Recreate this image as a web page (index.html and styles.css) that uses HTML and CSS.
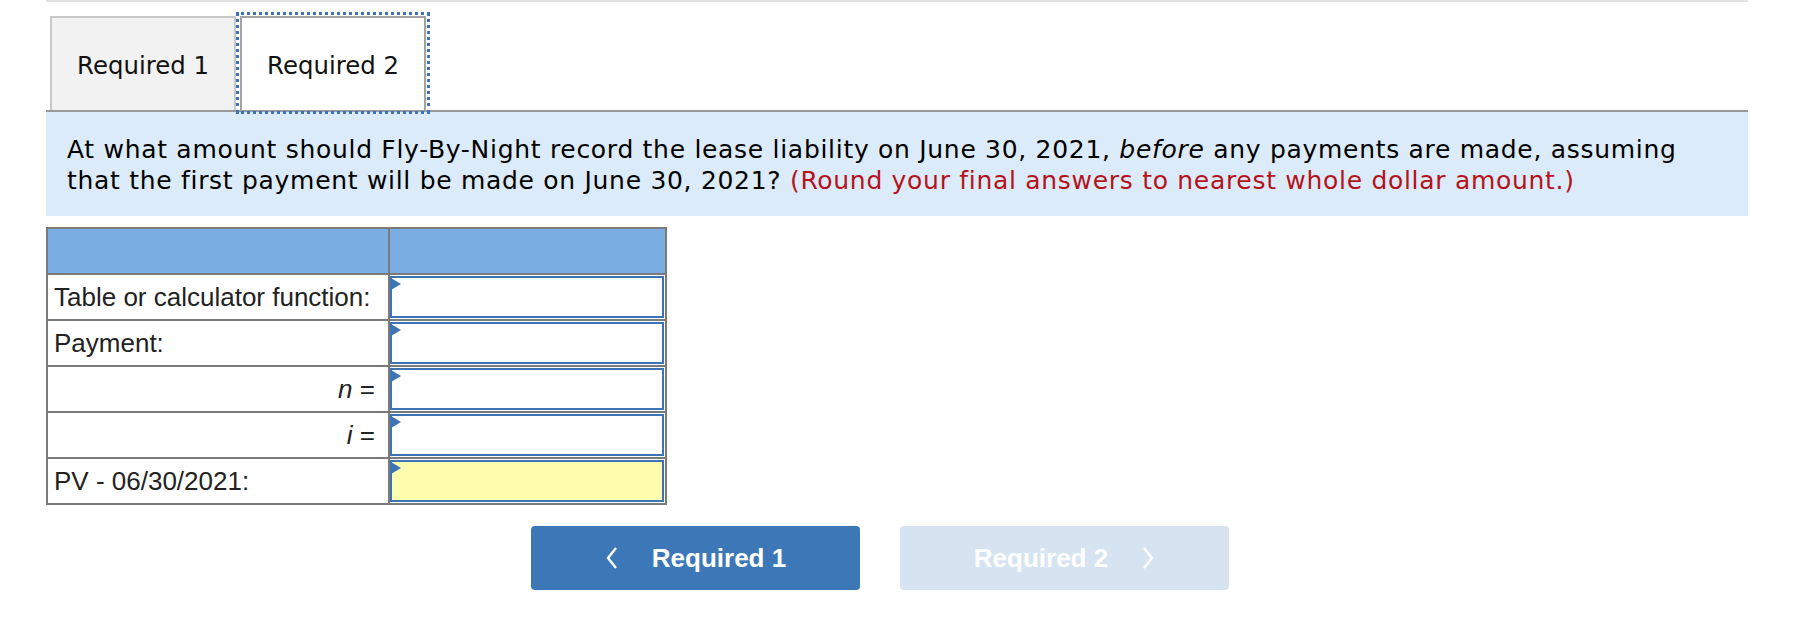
FILE: index.html
```html
<!DOCTYPE html>
<html>
<head>
<meta charset="utf-8">
<link rel="stylesheet" href="styles.css">
</head>
<body>
<div class="page">
  <div class="topline"></div>
  <div class="tabs">
    <div class="tab tab-inactive">Required 1</div>
    <div class="tab tab-active">Required 2</div>
  </div>
  <div class="question">
    At what amount should Fly-By-Night record the lease liability on June 30, 2021, <em>before</em> any payments are made, assuming<br>
    that the first payment will be made on June 30, 2021? <span class="note">(Round your final answers to nearest whole dollar amount.)</span>
  </div>
  <table class="grid">
    <tr class="head"><td class="lbl"></td><td class="inp"></td></tr>
    <tr><td class="lbl">Table or calculator function:</td><td class="inp"><div class="box"><span class="tri"></span></div></td></tr>
    <tr><td class="lbl">Payment:</td><td class="inp"><div class="box"><span class="tri"></span></div></td></tr>
    <tr><td class="lbl right"><i>n</i> =</td><td class="inp"><div class="box"><span class="tri"></span></div></td></tr>
    <tr><td class="lbl right"><i>i</i> =</td><td class="inp"><div class="box"><span class="tri"></span></div></td></tr>
    <tr><td class="lbl">PV - 06/30/2021:</td><td class="inp"><div class="box yellow"><span class="tri"></span></div></td></tr>
  </table>
  <div class="nav">
    <div class="btn btn-on">
      <svg class="chev" width="14" height="24" viewBox="0 0 14 24"><polyline points="11,2 3,12 11,22" fill="none" stroke="#fff" stroke-width="2.4"/></svg>
      <span>Required 1</span>
    </div>
    <div class="btn btn-off">
      <span>Required 2</span>
      <svg class="chev" width="14" height="24" viewBox="0 0 14 24"><polyline points="3,2 11,12 3,22" fill="none" stroke="#fff" stroke-width="2.4"/></svg>
    </div>
  </div>
</div>
</body>
</html>
```
FILE: styles.css
```css
html, body {
  margin: 0;
  padding: 0;
  background: #fff;
}
.page {
  margin-left: 46px;
  width: 1702px;
}
.topline {
  height: 2px;
  background: #e2e2e2;
}
.tabs {
  display: flex;
  margin-top: 14px;
  padding-left: 4px;
  gap: 4px;
  border-bottom: 2px solid #999;
}
.tab {
  box-sizing: border-box;
  width: 186px;
  height: 94px;
  padding-top: 3px;
  display: flex;
  align-items: center;
  justify-content: center;
  font-family: "DejaVu Sans", Verdana, sans-serif;
  font-size: 24.4px;
  color: #111;
}
.tab-inactive {
  background: #f2f2f2;
  border: 2px solid #c9c9c9;
  border-bottom: none;
}
.tab-active {
  background: #fff;
  border: 2px solid #a3a3a3;
  border-bottom: none;
  outline: 3px dotted #3b74bc;
  outline-offset: 1px;
}
.question {
  background: #dbebf9;
  padding: 22px 21px 20px;
  font-family: "DejaVu Sans", Verdana, sans-serif;
  font-size: 25px;
  letter-spacing: 0.7px;
  line-height: 31px;
  color: #000;
}
.note {
  color: #b5121b;
}
.grid {
  margin-top: 11px;
  border-collapse: collapse;
  border: 2px solid #7a7a7a;
  font-family: "Liberation Sans", Arial, sans-serif;
  font-size: 26px;
  color: #222;
}
.grid td {
  border: 2px solid #7a7a7a;
  height: 46px;
  padding: 0;
  box-sizing: border-box;
}
.grid tr.head td {
  background: #7aade2;
}
.lbl {
  width: 342px;
  padding: 0 0 0 6px !important;
  white-space: nowrap;
}
.lbl.right {
  text-align: right;
  padding: 0 13px 0 0 !important;
}
.inp {
  width: 277px;
  padding: 1px 1px 1px 0 !important;
}
.box {
  position: relative;
  box-sizing: border-box;
  height: 42px;
  border: 2px solid #3d74b6;
  background: #fff;
}
.box.yellow {
  background: #fefdae;
}
.tri {
  position: absolute;
  left: -1px;
  top: 0;
  width: 0;
  height: 0;
  border-top: 6px solid transparent;
  border-bottom: 6px solid transparent;
  border-left: 10px solid #3d74b6;
}
.nav {
  display: flex;
  gap: 40px;
  margin-top: 21px;
  margin-left: 485px;
}
.btn {
  width: 329px;
  height: 64px;
  border-radius: 4px;
  display: flex;
  align-items: center;
  justify-content: center;
  gap: 33px;
  font-family: "Liberation Sans", Arial, sans-serif;
  font-weight: bold;
  font-size: 26px;
  color: #fff;
}
.btn-on {
  background: #3c78b8;
}
.btn-off {
  background: #d6e3f1;
}
.chev {
  display: block;
}
```
